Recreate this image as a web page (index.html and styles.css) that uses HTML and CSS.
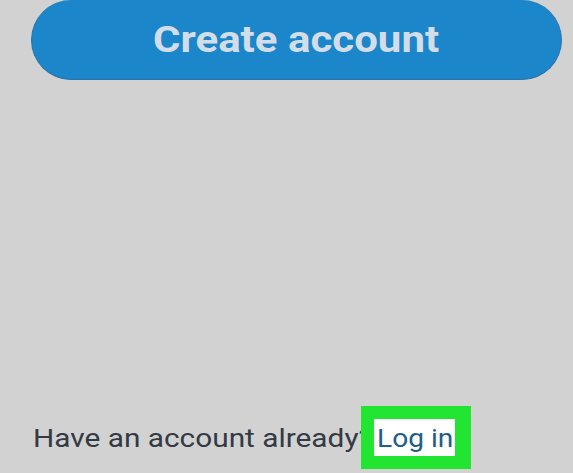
FILE: index.html
```html
<!DOCTYPE html>
<html>
<head>
<meta charset="utf-8">
<link rel="stylesheet" href="styles.css">
</head>
<body>
<div class="screen">
  <button class="create-btn"><span class="create-label">Create account</span></button>
  <div class="footer">
    <span class="question">Have an account already?</span><span class="login-mark"><a class="login" href="#">Log in</a></span>
  </div>
</div>
</body>
</html>
```
FILE: styles.css
```css
html, body {
  margin: 0;
  padding: 0;
  background: #d2d2d2;
}
.screen {
  height: 473px;
  display: flex;
  flex-direction: column;
  justify-content: space-between;
  font-family: Roboto, "Liberation Sans", sans-serif;
  box-sizing: border-box;
  padding: 0 11px 17px 31px;
}
.create-btn {
  height: 80px;
  width: 100%;
  border: 1px solid #2a72aa;
  border-top: none;
  border-radius: 40px;
  background: #1b86ca;
  color: #d3dde9;
  font-family: Roboto, "Liberation Sans", sans-serif;
  font-weight: 700;
  font-size: 37px;
  padding: 0;
  margin: 0;
}
.create-label {
  display: inline-block;
  transform: scaleX(1.135);
  transform-origin: center;
}
.footer {
  display: flex;
  align-items: center;
  height: 37px;
  padding-left: 2px;
}
.question {
  display: inline-block;
  color: #333a44;
  font-size: 26.5px;
  line-height: 37px;
  transform: scaleX(1.125);
  transform-origin: left center;
}
.login-mark {
  position: relative;
  z-index: 1;
  display: inline-block;
  width: 81px;
  height: 37px;
  margin-left: 39px;
  background: #ffffff;
  box-shadow: 0 0 0 13px #22e532, 3px 0 0 13px #22e532;
  box-sizing: border-box;
  padding-left: 3px;
  line-height: 37px;
}
.login {
  display: inline-block;
  color: #1f5d8b;
  font-size: 26.5px;
  text-decoration: none;
  transform: scaleX(1.06);
  transform-origin: left center;
}
```
